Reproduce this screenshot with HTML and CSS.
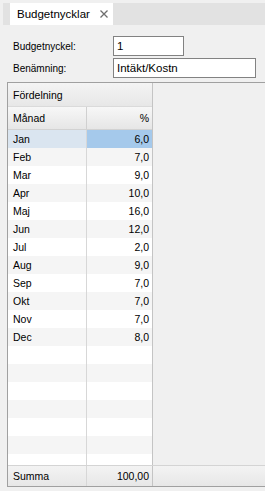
FILE: index.html
```html
<!DOCTYPE html>
<html>
<head>
  <title>Budgetnycklar</title>
  <link rel="stylesheet" href="styles.css">
</head>
<body>
  <div class="tabbar">
    <div class="tabrow">
      <div class="tab">
        <span>Budgetnycklar</span>
        <svg class="close" width="8" height="8" viewBox="0 0 8 8">
          <path d="M0.5 0.5 L7.5 7.5 M7.5 0.5 L0.5 7.5" stroke="#6e6e6e" stroke-width="1.3" fill="none"/>
        </svg>
      </div>
    </div>
  </div>

  <div class="form">
    <div class="form-row">
      <label>Budgetnyckel:</label>
      <input type="text" class="field short" value="1">
    </div>
    <div class="form-row">
      <label>Benämning:</label>
      <input type="text" class="field long" value="Intäkt/Kostn">
    </div>
  </div>

  <div class="grid">
    <div class="grid-main">
      <div class="cols">
        <div class="group-head">Fördelning</div>
        <div class="col-head">
          <div class="c1">Månad</div>
          <div class="c2">%</div>
        </div>
        <div class="rows">
          <div class="row sel"><div class="c1">Jan</div><div class="c2">6,0</div></div>
          <div class="row"><div class="c1">Feb</div><div class="c2">7,0</div></div>
          <div class="row"><div class="c1">Mar</div><div class="c2">9,0</div></div>
          <div class="row"><div class="c1">Apr</div><div class="c2">10,0</div></div>
          <div class="row"><div class="c1">Maj</div><div class="c2">16,0</div></div>
          <div class="row"><div class="c1">Jun</div><div class="c2">12,0</div></div>
          <div class="row"><div class="c1">Jul</div><div class="c2">2,0</div></div>
          <div class="row"><div class="c1">Aug</div><div class="c2">9,0</div></div>
          <div class="row"><div class="c1">Sep</div><div class="c2">7,0</div></div>
          <div class="row"><div class="c1">Okt</div><div class="c2">7,0</div></div>
          <div class="row"><div class="c1">Nov</div><div class="c2">7,0</div></div>
          <div class="row"><div class="c1">Dec</div><div class="c2">8,0</div></div>
          <div class="row"><div class="c1"></div><div class="c2"></div></div>
          <div class="row"><div class="c1"></div><div class="c2"></div></div>
          <div class="row"><div class="c1"></div><div class="c2"></div></div>
          <div class="row"><div class="c1"></div><div class="c2"></div></div>
          <div class="row"><div class="c1"></div><div class="c2"></div></div>
          <div class="row"><div class="c1"></div><div class="c2"></div></div>
          <div class="row"><div class="c1"></div><div class="c2"></div></div>
        </div>
      </div>
    </div>
    <div class="summa">
      <div class="c1">Summa</div>
      <div class="c2">100,00</div>
    </div>
  </div>
</body>
</html>
```

FILE: styles.css
```css
body {
  margin: 0;
  background-color: #f0f0f0;
  font-family: 'Liberation Sans', Arial, sans-serif;
  color: #000;
}

/* tab strip */
.tabbar { padding: 3px 0 0 3px; }
.tabrow {
  display: flex;
  height: 22px;
  padding-left: 7px;
  background-color: #e2e2e2;
}
.tab {
  display: flex; align-items: center;
  width: 103px; box-sizing: border-box;
  padding: 0 5px 0 7px;
  background-color: #fff;
  font-size: 11.5px;
}
.tab .close { margin-left: auto; }

/* form */
.form {
  display: flex; flex-direction: column; gap: 2px;
  padding: 11px 0 0 13px;
}
.form-row { display: flex; align-items: center; height: 20px; }
.form-row label { width: 100px; font-size: 10px; }
.field {
  height: 20px; box-sizing: border-box;
  margin: 0; padding: 0 3px;
  border: 1px solid #828282;
  background: #fff;
  font-family: 'Liberation Sans', Arial, sans-serif;
  font-size: 11.5px; color: #000;
  outline: none;
}
.field.short { width: 71px; }
.field.long { width: 143px; }

/* grid */
.grid {
  display: flex; flex-direction: column;
  height: 405px; box-sizing: border-box;
  margin: 4px 0 0 7px;
  border: 1px solid #a0a0a0; border-right: none;
  font-size: 10.5px;
}
.grid-main { flex: 1; display: flex; overflow: hidden; }
.cols {
  width: 145px; box-sizing: border-box;
  display: flex; flex-direction: column;
  border-right: 1px solid #c4c4c4;
}
.c1 {
  width: 79px; box-sizing: border-box;
  padding-left: 5px;
  border-right: 1px solid #d7d7d7;
}
.c2 { width: 65px; box-sizing: border-box; padding-right: 3px; text-align: right; }

.group-head {
  height: 24px; box-sizing: border-box;
  display: flex; align-items: center;
  padding-left: 5px;
  background: linear-gradient(#f4f4f4, #e7e7e7);
  border-bottom: 1px solid #dadada;
}
.col-head {
  display: flex; height: 23px; box-sizing: border-box;
  background: linear-gradient(#f7f7f7, #e6e6e6);
  border-bottom: 1px solid #d2d2d2;
}
.col-head > div, .row > div, .summa > div {
  display: flex; align-items: center;
}
.col-head .c1 { border-right-color: #d0d0d0; }
.col-head .c2, .row .c2, .summa .c2 { justify-content: flex-end; }

.rows { flex: 1; overflow: hidden; }
.row { display: flex; height: 18px; background-color: #fff; }
.row:nth-child(even) { background-color: #f5f5f5; }
.row.sel .c1 { background-color: #dae5f0; }
.row.sel .c2 { background-color: #a5c9eb; }

.summa {
  display: flex; height: 21px; box-sizing: border-box;
  background: linear-gradient(#f3f3f3, #e7e7e7);
  border-top: 1px solid #d4d4d4;
}
.summa .c2 { border-right: 1px solid #c4c4c4; width: 66px; }
```
